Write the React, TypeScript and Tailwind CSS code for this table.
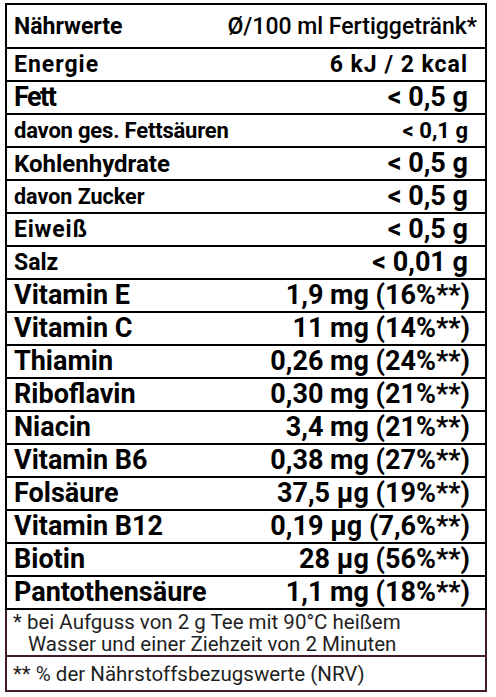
type Row = {
  label: string;
  value: string;
  labelClass: string;
  valueClass: string;
  pad: string;
};

const small = 'pr-[17px]';
const big = 'pr-[15px]';

const rows: Row[] = [
  { label: 'Energie', value: '6 kJ / 2 kcal', labelClass: 'text-[23px] tracking-[1px]', valueClass: 'text-[23px] tracking-[1px]', pad: small },
  { label: 'Fett', value: '< 0,5 g', labelClass: 'text-[27px] tracking-[-1.5px]', valueClass: 'text-[27px]', pad: small },
  { label: 'davon ges. Fettsäuren', value: '< 0,1 g', labelClass: 'text-[22px] tracking-[-0.2px]', valueClass: 'text-[22px]', pad: small },
  { label: 'Kohlenhydrate', value: '< 0,5 g', labelClass: 'text-[24px]', valueClass: 'text-[27px]', pad: small },
  { label: 'davon Zucker', value: '< 0,5 g', labelClass: 'text-[21.5px]', valueClass: 'text-[27px]', pad: small },
  { label: 'Eiweiß', value: '< 0,5 g', labelClass: 'text-[23px] tracking-[0.8px]', valueClass: 'text-[27px]', pad: small },
  { label: 'Salz', value: '< 0,01 g', labelClass: 'text-[23px]', valueClass: 'text-[27px]', pad: small },
  { label: 'Vitamin E', value: '1,9 mg (16%**)', labelClass: 'text-[27px]', valueClass: 'text-[27px]', pad: big },
  { label: 'Vitamin C', value: '11 mg (14%**)', labelClass: 'text-[27px]', valueClass: 'text-[27px]', pad: big },
  { label: 'Thiamin', value: '0,26 mg (24%**)', labelClass: 'text-[27px]', valueClass: 'text-[27px]', pad: big },
  { label: 'Riboflavin', value: '0,30 mg (21%**)', labelClass: 'text-[27px]', valueClass: 'text-[27px]', pad: big },
  { label: 'Niacin', value: '3,4 mg (21%**)', labelClass: 'text-[27px]', valueClass: 'text-[27px]', pad: big },
  { label: 'Vitamin B6', value: '0,38 mg (27%**)', labelClass: 'text-[27px]', valueClass: 'text-[27px]', pad: big },
  { label: 'Folsäure', value: '37,5 µg (19%**)', labelClass: 'text-[27px]', valueClass: 'text-[27px]', pad: big },
  { label: 'Vitamin B12', value: '0,19 µg (7,6%**)', labelClass: 'text-[27px]', valueClass: 'text-[27px]', pad: big },
  { label: 'Biotin', value: '28 µg (56%**)', labelClass: 'text-[27px]', valueClass: 'text-[27px]', pad: big },
  { label: 'Pantothensäure', value: '1,1 mg (18%**)', labelClass: 'text-[27px]', valueClass: 'text-[27px]', pad: big },
];

export default function App() {
  return (
    <div className="min-h-[697px] bg-white pt-[3px] pl-[5px] font-['Roboto',sans-serif] text-black">
      <div className="w-[482px]">
        <div className="border-x-2 border-t-2 border-black">
          <div className="flex h-[44px] items-center justify-between border-b-2 border-black pl-[7px] pr-[8px]">
            <span className="text-[23px] font-bold leading-none">Nährwerte</span>
            <span className="text-[23px] font-medium leading-none">Ø/100 ml Fertiggetränk*</span>
          </div>
          {rows.map((row) => (
            <div
              key={row.label}
              className={`flex h-[33px] items-center justify-between border-b-2 border-black pl-[7px] ${row.pad}`}
            >
              <span className={`font-bold leading-none ${row.labelClass}`}>{row.label}</span>
              <span className={`font-bold leading-none ${row.valueClass}`}>{row.value}</span>
            </div>
          ))}
        </div>
        <div className="border-x-2 border-b-2 border-[#431a2c] text-[20.5px] leading-[22px] text-[#1f1f1f]">
          <div className="flex h-[47px] flex-col justify-center border-b-2 border-[#431a2c] pl-[6px]">
            <p>* bei Aufguss von 2 g Tee mit 90°C heißem</p>
            <p className="pl-[15px]">Wasser und einer Ziehzeit von 2 Minuten</p>
          </div>
          <div className="flex h-[33px] items-center pl-[6px]">
            <p>** % der Nährstoffsbezugswerte (NRV)</p>
          </div>
        </div>
      </div>
    </div>
  );
}
